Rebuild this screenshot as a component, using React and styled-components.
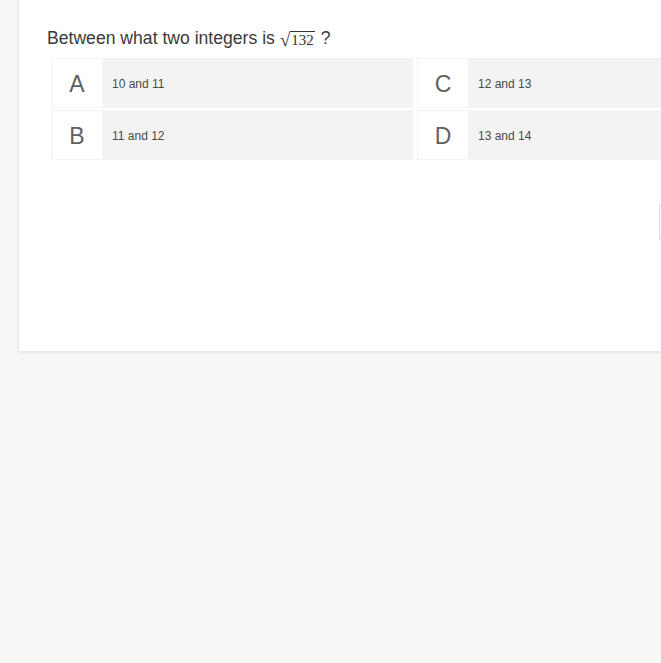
import React from "react";
import styled, { createGlobalStyle } from "styled-components";

const Global = createGlobalStyle`
  html, body { margin: 0; padding: 0; background: #f8f7f5; overflow: hidden; }
  body { font-family: "Liberation Sans", Arial, sans-serif; }
`;

const Page = styled.div`
  width: 661px;
  height: 663px;
  overflow: hidden;
  background: #f8f7f5;
`;

const Card = styled.div`
  margin-left: 18px;
  width: 900px;
  height: 352px;
  box-sizing: border-box;
  background: #ffffff;
  border: 1px solid #e9e8e6;
  border-top: none;
  box-shadow: 0 1px 2px rgba(0, 0, 0, 0.08);
  padding: 26px 0 0 28px;
`;

const Question = styled.div`
  font-size: 17.6px;
  line-height: 24px;
  color: #3a3a3a;
  display: flex;
  align-items: baseline;
  white-space: nowrap;
`;

const Sqrt = styled.span`
  display: inline-flex;
  align-items: flex-end;
  margin: 0 6px 0 5px;
  font-family: "Liberation Serif", "Times New Roman", serif;
  color: #333;
  transform: translateY(2px);
`;

const Radical = styled.span`
  font-size: 19px;
  line-height: 19px;
`;

const Radicand = styled.span`
  font-size: 15px;
  line-height: 15px;
  border-top: 1px solid #333;
  padding: 1px 1px 0;
  margin-bottom: 1px;
`;

const Options = styled.div`
  display: grid;
  grid-template-columns: 362px 362px;
  grid-auto-rows: 50px;
  column-gap: 4px;
  row-gap: 2px;
  margin: 8px 0 0 4px;
`;

const Option = styled.div`
  display: flex;
  background: #f3f3f3;
  padding: 1px;
  box-sizing: border-box;
`;

const Letter = styled.div`
  width: 50px;
  background: #ffffff;
  display: flex;
  align-items: center;
  justify-content: center;
  padding-top: 2px;
  box-sizing: border-box;
  font-size: 23px;
  color: #606060;
`;

const Answer = styled.div`
  display: flex;
  align-items: center;
  padding: 2px 0 0 10px;
  font-size: 12px;
  color: #4a4a4a;
`;

const Footer = styled.div`
  margin-top: 45px;
  padding-left: 612px;
`;

const NextButton = styled.div`
  width: 120px;
  height: 35px;
  box-sizing: border-box;
  border: 1px solid #dcdcdc;
  background: #fff;
`;

const options = [
  ["A", "10 and 11"],
  ["C", "12 and 13"],
  ["B", "11 and 12"],
  ["D", "13 and 14"],
];

export default function App() {
  return (
    <Page>
      <Global />
      <Card>
        <Question>
          Between what two integers is
          <Sqrt>
            <Radical>√</Radical>
            <Radicand>132</Radicand>
          </Sqrt>
          ?
        </Question>
        <Options>
          {options.map(([l, t]) => (
            <Option key={l}>
              <Letter>{l}</Letter>
              <Answer>{t}</Answer>
            </Option>
          ))}
        </Options>
        <Footer>
          <NextButton />
        </Footer>
      </Card>
    </Page>
  );
}
